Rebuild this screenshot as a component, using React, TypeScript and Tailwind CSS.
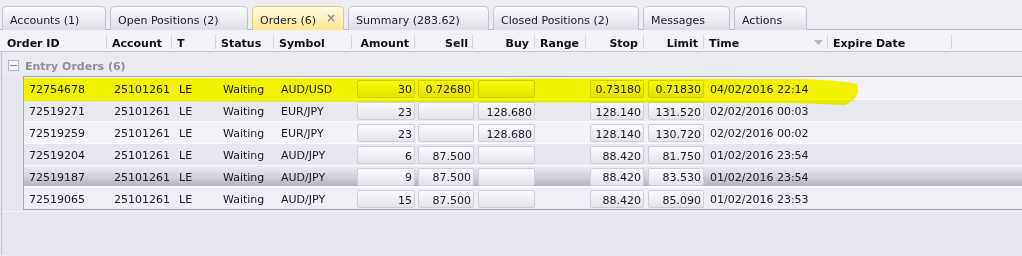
import React from "react";

type Row = {
  id: string;
  sym: string;
  amt: string;
  sell: string;
  buy: string;
  stop: string;
  limit: string;
  time: string;
};

const rows: Row[] = [
  { id: "72754678", sym: "AUD/USD", amt: "30", sell: "0.72680", buy: "", stop: "0.73180", limit: "0.71830", time: "04/02/2016 22:14" },
  { id: "72519271", sym: "EUR/JPY", amt: "23", sell: "", buy: "128.680", stop: "128.140", limit: "131.520", time: "02/02/2016 00:03" },
  { id: "72519259", sym: "EUR/JPY", amt: "23", sell: "", buy: "128.680", stop: "128.140", limit: "130.720", time: "02/02/2016 00:02" },
  { id: "72519204", sym: "AUD/JPY", amt: "6", sell: "87.500", buy: "", stop: "88.420", limit: "81.750", time: "01/02/2016 23:54" },
  { id: "72519187", sym: "AUD/JPY", amt: "9", sell: "87.500", buy: "", stop: "88.420", limit: "83.530", time: "01/02/2016 23:54" },
  { id: "72519065", sym: "AUD/JPY", amt: "15", sell: "87.500", buy: "", stop: "88.420", limit: "85.090", time: "01/02/2016 23:53" },
];

const rowBg = [
  "bg-[#f2f2f7]",
  "bg-[#e8e8f0]",
  "bg-[#f2f2f7]",
  "bg-[#e7e7ef]",
  "bg-gradient-to-b from-[#ececf1] via-[#d4d4de] to-[#b2b2c2] border-b border-[#8e8ea2]",
  "bg-[#eeeef4]",
];

function Tab({ label, active, w }: { label: string; active?: boolean; w: string }) {
  return (
    <div
      className={
        "h-[24px] rounded-t-[5px] border border-b-0 flex items-center pl-[7px] pt-[3px] relative " +
        w +
        (active
          ? " border-[#e6c870] bg-gradient-to-b from-[#fffbe6] to-[#ffe58e]"
          : " border-[#c4c4d2] bg-gradient-to-b from-[#fbfbfd] to-[#dedee8]")
      }
    >
      <span className="text-[#1a1a24]">{label}</span>
      {active && (
        <span className="absolute right-[7px] top-[5px] text-[#8a8aa0] font-bold text-[12px]">×</span>
      )}
    </div>
  );
}

function Box({ v, w, ml }: { v: string; w: string; ml: string }) {
  return (
    <div className={"h-[18px] mt-[1px] pt-[2px] " + ml + " " + w + " rounded-[2px] border border-[#cfcfdb] bg-gradient-to-b from-[#f9f9fc] to-[#e3e3eb] flex items-center justify-end pr-[2px]"}>
      {v}
    </div>
  );
}

function HeadCell({ label, w, right, sort, pl, pr }: { label: string; w: string; right?: boolean; sort?: boolean; pl?: string; pr?: string }) {
  return (
    <div className={"h-full flex items-center pt-[5px] relative " + w + (right ? " justify-end " : " ") + (pl || "") + " " + (pr || "")}>
      <span className="font-bold text-[#111]">{label}</span>
      {sort && (
        <svg className="absolute right-[5px] top-[10px]" width="9" height="5" viewBox="0 0 9 5">
          <path d="M0 0 L9 0 L4.5 5 Z" fill="#b8b8c6" />
        </svg>
      )}
      <div className="absolute right-0 top-[5px] h-[14px] w-px bg-[#d4d4e0]" />
    </div>
  );
}

export default function App() {
  return (
    <div className="w-[1022px] h-[256px] overflow-hidden bg-[#e9e9f1] font-['DejaVu_Sans',Verdana,sans-serif] text-[11px] text-[#1a1a26] relative leading-none">
      {/* tabs */}
      <div className="h-[30px] pt-[6px] pl-[2px] flex gap-[4px] bg-[#ececf3] border-b border-[#b9b9c9]">
        <Tab label="Accounts (1)" w="w-[104px]" />
        <Tab label="Open Positions (2)" w="w-[138px]" />
        <Tab label="Orders (6)" active w="w-[92px]" />
        <Tab label="Summary (283.62)" w="w-[141px]" />
        <Tab label="Closed Positions (2)" w="w-[146px]" />
        <Tab label="Messages" w="w-[87px]" />
        <Tab label="Actions" w="w-[73px]" />
      </div>
      {/* header */}
      <div className="h-[22px] flex bg-[#f1f1f6] border-b border-[#c6c6d4]">
        <HeadCell label="Order ID" w="w-[107px]" pl="pl-[7px]" />
        <HeadCell label="Account" w="w-[65px]" pl="pl-[5px]" />
        <HeadCell label="T" w="w-[44px]" pl="pl-[5px]" />
        <HeadCell label="Status" w="w-[58px]" pl="pl-[5px]" />
        <HeadCell label="Symbol" w="w-[78px]" pl="pl-[5px]" />
        <HeadCell label="Amount" w="w-[63px]" right pr="pr-[6px]" />
        <HeadCell label="Sell" w="w-[58px]" right pr="pr-[5px]" />
        <HeadCell label="Buy" w="w-[62px]" right pr="pr-[6px]" />
        <HeadCell label="Range" w="w-[51px]" pl="pl-[5px]" />
        <HeadCell label="Stop" w="w-[58px]" right pr="pr-[6px]" />
        <HeadCell label="Limit" w="w-[60px]" right pr="pr-[6px]" />
        <HeadCell label="Time" w="w-[124px]" pl="pl-[5px]" sort />
        <HeadCell label="Expire Date" w="w-[124px]" pl="pl-[5px]" />
      </div>
      {/* body */}
      <div className="border-l border-[#c4c4d0] ml-[1px] h-[203px] bg-[#e6e6ee]">
        {/* group row */}
        <div className="h-[24px] flex items-center bg-[#eaeaf1]">
          <div className="ml-[6px] mt-[2px] w-[11px] h-[11px] border border-[#b8b8c6] bg-[#f4f4f8] flex items-center justify-center">
            <div className="w-[7px] h-px bg-[#8a8a9c]" />
          </div>
          <span className="ml-[6px] pt-[5px] font-bold text-[#8e8e9e]">Entry Orders (6)</span>
        </div>
        <div className="ml-[21px] border-l border-t border-b border-[#a9a9bb]">
          {rows.map((r, i) => (
            <div key={r.id} className={"h-[22px] flex items-center border-t border-[#fafafd] first:border-t-0 " + rowBg[i]}>
              <div className="w-[84px] pl-[5px] pt-[2px]">{r.id}</div>
              <div className="w-[65px] pl-[6px] pt-[2px]">25101261</div>
              <div className="w-[44px] pl-[6px] pt-[2px]">LE</div>
              <div className="w-[58px] pl-[6px] pt-[2px]">Waiting</div>
              <div className="w-[78px] pl-[6px] pt-[2px]">{r.sym}</div>
              <div className="w-[63px] flex"><Box v={r.amt} ml="ml-[4px]" w="w-[58px]" /></div>
              <div className="w-[60px] flex"><Box v={r.sell} ml="ml-[2px]" w="w-[56px]" /></div>
              <div className="w-[60px] flex"><Box v={r.buy} ml="ml-[2px]" w="w-[57px]" /></div>
              <div className="w-[52px]" />
              <div className="w-[58px] flex"><Box v={r.stop} ml="ml-[2px]" w="w-[54px]" /></div>
              <div className="w-[60px] flex"><Box v={r.limit} ml="ml-[2px]" w="w-[56px]" /></div>
              <div className="w-[123px] pl-[4px] pt-[2px]">{r.time}</div>
            </div>
          ))}
        </div>
        <div className="h-px bg-[#f4f4f8] mt-[1px]" />
      </div>
      {/* highlighter mark */}
      <svg className="absolute left-0 top-0 pointer-events-none mix-blend-multiply" width="1022" height="256" viewBox="0 0 1022 256">
        <path d="M24,78 L800,79 Q840,80 857,84 L858,92 Q855,101 845,105 Q820,104 790,103 L24,101 Z" fill="#ffff00" />
      </svg>
    </div>
  );
}
